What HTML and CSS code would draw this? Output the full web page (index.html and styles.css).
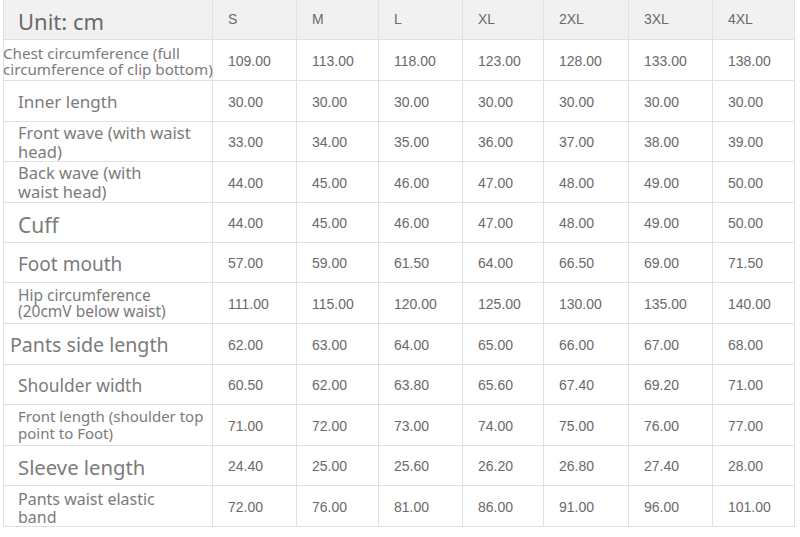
FILE: index.html
```html
<!DOCTYPE html>
<html>
<head>
<meta charset="utf-8">
<link rel="stylesheet" href="styles.css">
</head>
<body>
<div class="sheet">
  <div class="c lab head"><span class="t-unit">Unit: cm</span></div>
  <div class="c hd">S</div><div class="c hd">M</div><div class="c hd">L</div><div class="c hd">XL</div><div class="c hd">2XL</div><div class="c hd">3XL</div><div class="c hd">4XL</div>

  <div class="c lab"><span class="t-chest">Chest circumference (full circumference of clip bottom)</span></div>
  <div class="c v">109.00</div><div class="c v">113.00</div><div class="c v">118.00</div><div class="c v">123.00</div><div class="c v">128.00</div><div class="c v">133.00</div><div class="c v">138.00</div>

  <div class="c lab"><span class="t-inner">Inner length</span></div>
  <div class="c v">30.00</div><div class="c v">30.00</div><div class="c v">30.00</div><div class="c v">30.00</div><div class="c v">30.00</div><div class="c v">30.00</div><div class="c v">30.00</div>

  <div class="c lab"><span class="t-wave">Front wave (with waist head)</span></div>
  <div class="c v">33.00</div><div class="c v">34.00</div><div class="c v">35.00</div><div class="c v">36.00</div><div class="c v">37.00</div><div class="c v">38.00</div><div class="c v">39.00</div>

  <div class="c lab"><span class="t-wave t-back">Back wave (with waist head)</span></div>
  <div class="c v">44.00</div><div class="c v">45.00</div><div class="c v">46.00</div><div class="c v">47.00</div><div class="c v">48.00</div><div class="c v">49.00</div><div class="c v">50.00</div>

  <div class="c lab"><span class="t-cuff">Cuff</span></div>
  <div class="c v">44.00</div><div class="c v">45.00</div><div class="c v">46.00</div><div class="c v">47.00</div><div class="c v">48.00</div><div class="c v">49.00</div><div class="c v">50.00</div>

  <div class="c lab"><span class="t-foot">Foot mouth</span></div>
  <div class="c v">57.00</div><div class="c v">59.00</div><div class="c v">61.50</div><div class="c v">64.00</div><div class="c v">66.50</div><div class="c v">69.00</div><div class="c v">71.50</div>

  <div class="c lab"><span class="t-hip">Hip circumference (20cmV below waist)</span></div>
  <div class="c v">111.00</div><div class="c v">115.00</div><div class="c v">120.00</div><div class="c v">125.00</div><div class="c v">130.00</div><div class="c v">135.00</div><div class="c v">140.00</div>

  <div class="c lab"><span class="t-side">Pants side length</span></div>
  <div class="c v">62.00</div><div class="c v">63.00</div><div class="c v">64.00</div><div class="c v">65.00</div><div class="c v">66.00</div><div class="c v">67.00</div><div class="c v">68.00</div>

  <div class="c lab"><span class="t-shoulder">Shoulder width</span></div>
  <div class="c v">60.50</div><div class="c v">62.00</div><div class="c v">63.80</div><div class="c v">65.60</div><div class="c v">67.40</div><div class="c v">69.20</div><div class="c v">71.00</div>

  <div class="c lab"><span class="t-front">Front length (shoulder top point to Foot)</span></div>
  <div class="c v">71.00</div><div class="c v">72.00</div><div class="c v">73.00</div><div class="c v">74.00</div><div class="c v">75.00</div><div class="c v">76.00</div><div class="c v">77.00</div>

  <div class="c lab"><span class="t-sleeve">Sleeve length</span></div>
  <div class="c v">24.40</div><div class="c v">25.00</div><div class="c v">25.60</div><div class="c v">26.20</div><div class="c v">26.80</div><div class="c v">27.40</div><div class="c v">28.00</div>

  <div class="c lab"><span class="t-band">Pants waist elastic band</span></div>
  <div class="c v">72.00</div><div class="c v">76.00</div><div class="c v">81.00</div><div class="c v">86.00</div><div class="c v">91.00</div><div class="c v">96.00</div><div class="c v">101.00</div>
</div>
</body>
</html>
```

FILE: styles.css
```css
html, body {
  margin: 0;
  padding: 0;
  background: #ffffff;
}

.sheet {
  margin-left: 3px;
  width: 792px;
  display: grid;
  grid-template-columns: 209px 84px 82px 84px 81px 85px 84px 82px;
  grid-template-rows: 40px 41px 41px 40px 41px 40px 40px 41px 41px 40px 41px 40px 41px;
  border-left: 1px solid #e0e0e0;
  box-sizing: content-box;
}

.c {
  box-sizing: border-box;
  border-right: 1px solid #e0e0e0;
  border-bottom: 1px solid #e0e0e0;
  display: flex;
  align-items: center;
  overflow: visible;
}

.hd, .v {
  font-family: "Liberation Sans", Arial, sans-serif;
  font-size: 14px;
  color: #6a6a6a;
  padding-left: 15px;
}

.hd {
  background: #f1f1f1;
  padding-bottom: 2px;
}

.head {
  background: #f1f1f1;
}

.v {
  padding-top: 1px;
}

.lab {
  font-family: "Noto Sans", "Open Sans", sans-serif;
  color: #7b7b7b;
  padding-left: 14px;
  white-space: normal;
}

.lab span {
  display: block;
}

.t-unit {
  font-size: 22px;
  color: #6a6a6a;
  padding-top: 2px;
}

.t-chest {
  font-size: 15.2px;
  line-height: 16px;
  margin-left: -15px;
  width: 226px;
  flex: none;
  padding-top: 1px;
}

.t-inner {
  font-size: 17px;
}

.t-wave {
  font-size: 16.5px;
  line-height: 19px;
  width: 190px;
}

.t-back {
  width: 150px;
}

.t-cuff {
  font-size: 21px;
  padding-top: 4px;
}

.t-foot {
  font-size: 19px;
  padding-top: 2px;
}

.t-hip {
  font-size: 15.5px;
  line-height: 16px;
  width: 180px;
}

.t-side {
  font-size: 19.6px;
  margin-left: -8px;
}

.t-shoulder {
  font-size: 17.4px;
}

.t-front {
  font-size: 15px;
  line-height: 17px;
  width: 195px;
}

.t-sleeve {
  font-size: 20.3px;
  padding-top: 2px;
}

.t-band {
  font-size: 16px;
  line-height: 18px;
  width: 150px;
  padding-top: 4px;
}
```
